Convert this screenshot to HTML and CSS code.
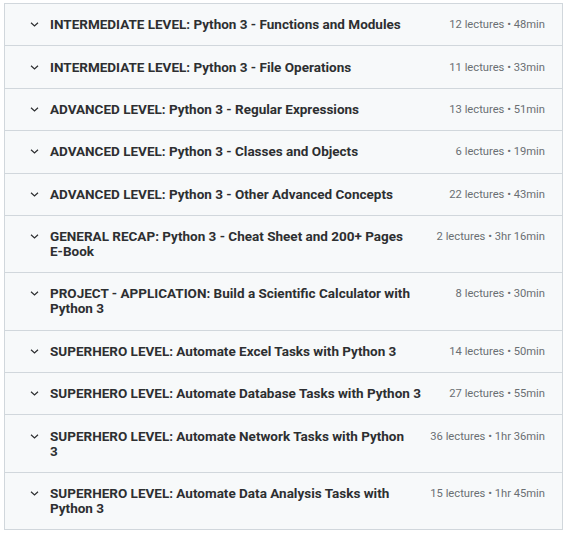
FILE: index.html
```html
<!DOCTYPE html>
<html>
<head>
<meta charset="utf-8">
<link rel="stylesheet" href="styles.css">
</head>
<body>
<div class="curriculum">
  <div class="section">
    <span class="chev"><svg viewBox="0 0 9 5" width="9" height="5"><path d="M1 0.8 L4.5 4 L8 0.8" fill="none" stroke="#2d2f31" stroke-width="1.2"/></svg></span>
    <span class="title">INTERMEDIATE LEVEL: Python 3 - Functions and Modules</span>
    <span class="meta">12 lectures • 48min</span>
  </div>
  <div class="section">
    <span class="chev"><svg viewBox="0 0 9 5" width="9" height="5"><path d="M1 0.8 L4.5 4 L8 0.8" fill="none" stroke="#2d2f31" stroke-width="1.2"/></svg></span>
    <span class="title">INTERMEDIATE LEVEL: Python 3 - File Operations</span>
    <span class="meta">11 lectures • 33min</span>
  </div>
  <div class="section">
    <span class="chev"><svg viewBox="0 0 9 5" width="9" height="5"><path d="M1 0.8 L4.5 4 L8 0.8" fill="none" stroke="#2d2f31" stroke-width="1.2"/></svg></span>
    <span class="title">ADVANCED LEVEL: Python 3 - Regular Expressions</span>
    <span class="meta">13 lectures • 51min</span>
  </div>
  <div class="section">
    <span class="chev"><svg viewBox="0 0 9 5" width="9" height="5"><path d="M1 0.8 L4.5 4 L8 0.8" fill="none" stroke="#2d2f31" stroke-width="1.2"/></svg></span>
    <span class="title">ADVANCED LEVEL: Python 3 - Classes and Objects</span>
    <span class="meta">6 lectures • 19min</span>
  </div>
  <div class="section">
    <span class="chev"><svg viewBox="0 0 9 5" width="9" height="5"><path d="M1 0.8 L4.5 4 L8 0.8" fill="none" stroke="#2d2f31" stroke-width="1.2"/></svg></span>
    <span class="title">ADVANCED LEVEL: Python 3 - Other Advanced Concepts</span>
    <span class="meta">22 lectures • 43min</span>
  </div>
  <div class="section">
    <span class="chev"><svg viewBox="0 0 9 5" width="9" height="5"><path d="M1 0.8 L4.5 4 L8 0.8" fill="none" stroke="#2d2f31" stroke-width="1.2"/></svg></span>
    <span class="title">GENERAL RECAP: Python 3 - Cheat Sheet and 200+ Pages <span class="nobr">E-Book</span></span>
    <span class="meta">2 lectures • 3hr 16min</span>
  </div>
  <div class="section">
    <span class="chev"><svg viewBox="0 0 9 5" width="9" height="5"><path d="M1 0.8 L4.5 4 L8 0.8" fill="none" stroke="#2d2f31" stroke-width="1.2"/></svg></span>
    <span class="title">PROJECT - APPLICATION: Build a Scientific Calculator with Python 3</span>
    <span class="meta">8 lectures • 30min</span>
  </div>
  <div class="section">
    <span class="chev"><svg viewBox="0 0 9 5" width="9" height="5"><path d="M1 0.8 L4.5 4 L8 0.8" fill="none" stroke="#2d2f31" stroke-width="1.2"/></svg></span>
    <span class="title">SUPERHERO LEVEL: Automate Excel Tasks with Python 3</span>
    <span class="meta">14 lectures • 50min</span>
  </div>
  <div class="section">
    <span class="chev"><svg viewBox="0 0 9 5" width="9" height="5"><path d="M1 0.8 L4.5 4 L8 0.8" fill="none" stroke="#2d2f31" stroke-width="1.2"/></svg></span>
    <span class="title">SUPERHERO LEVEL: Automate Database Tasks with Python 3</span>
    <span class="meta">27 lectures • 55min</span>
  </div>
  <div class="section">
    <span class="chev"><svg viewBox="0 0 9 5" width="9" height="5"><path d="M1 0.8 L4.5 4 L8 0.8" fill="none" stroke="#2d2f31" stroke-width="1.2"/></svg></span>
    <span class="title">SUPERHERO LEVEL: Automate Network Tasks with Python 3</span>
    <span class="meta">36 lectures • 1hr 36min</span>
  </div>
  <div class="section">
    <span class="chev"><svg viewBox="0 0 9 5" width="9" height="5"><path d="M1 0.8 L4.5 4 L8 0.8" fill="none" stroke="#2d2f31" stroke-width="1.2"/></svg></span>
    <span class="title">SUPERHERO LEVEL: Automate Data Analysis Tasks with Python 3</span>
    <span class="meta">15 lectures • 1hr 45min</span>
  </div>
</div>
</body>
</html>
```
FILE: styles.css
```css
html, body {
  margin: 0;
  padding: 0;
  background: #ffffff;
}

.curriculum {
  margin: 3px 3px 0 4px;
  border: 1px solid #d1d7dc;
  border-bottom: none;
  font-family: Roboto, "Liberation Sans", sans-serif;
}

.section {
  display: flex;
  align-items: flex-start;
  padding: 13.2px 17px 13.2px 25px;
  background: #f7f9fa;
  border-bottom: 1px solid #d1d7dc;
}

.chev {
  flex: none;
  width: 9px;
  height: 15px;
  margin-right: 11px;
  display: flex;
  align-items: center;
}

.chev svg {
  display: block;
}

.title {
  flex: 1;
  font-size: 13.5px;
  line-height: 15px;
  font-weight: 700;
  color: #2d2f31;
}

.nobr {
  white-space: nowrap;
}

.meta {
  flex: none;
  margin-left: 20px;
  font-size: 11.2px;
  line-height: 15px;
  color: #6a6f73;
  white-space: nowrap;
}
```
